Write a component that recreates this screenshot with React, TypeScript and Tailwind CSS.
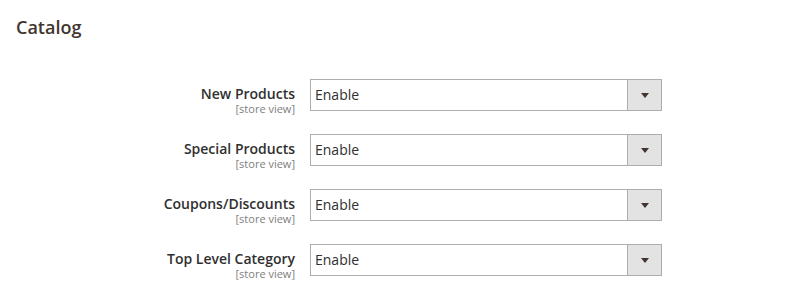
const rows = ['New Products', 'Special Products', 'Coupons/Discounts', 'Top Level Category'];

function Select() {
  return (
    <div className="flex h-[32px] w-[352px] border border-[#adadad] bg-white">
      <div className="flex-1 pl-[4px] text-[14px] leading-[30px] text-[#303030]">Enable</div>
      <div className="flex w-[34px] items-center justify-center border-l border-[#adadad] bg-[#e3e3e3]">
        <span className="block h-0 w-0 border-x-[4px] border-t-[5px] border-x-transparent border-t-[#41362f]" />
      </div>
    </div>
  );
}

export default function App() {
  return (
    <div className="h-[292px] w-[811px] bg-white font-['Open_Sans',sans-serif]">
      <div className="pl-[16px] pt-[15px] text-[18px] font-semibold leading-[24px] text-[#41362f]">Catalog</div>

      <div className="mt-[40px] flex flex-col gap-[23px]">
        {rows.map((label) => (
          <div key={label} className="flex h-[32px] items-start">
            <div className="flex w-[295px] flex-col items-end pt-[6px]">
              <span className="text-[14px] font-semibold leading-[18px] text-[#303030]">{label}</span>
              <span className="text-[11px] leading-[12px] text-[#808080]">[store view]</span>
            </div>
            <div className="ml-[15px]">
              <Select />
            </div>
          </div>
        ))}
      </div>
    </div>
  );
}
